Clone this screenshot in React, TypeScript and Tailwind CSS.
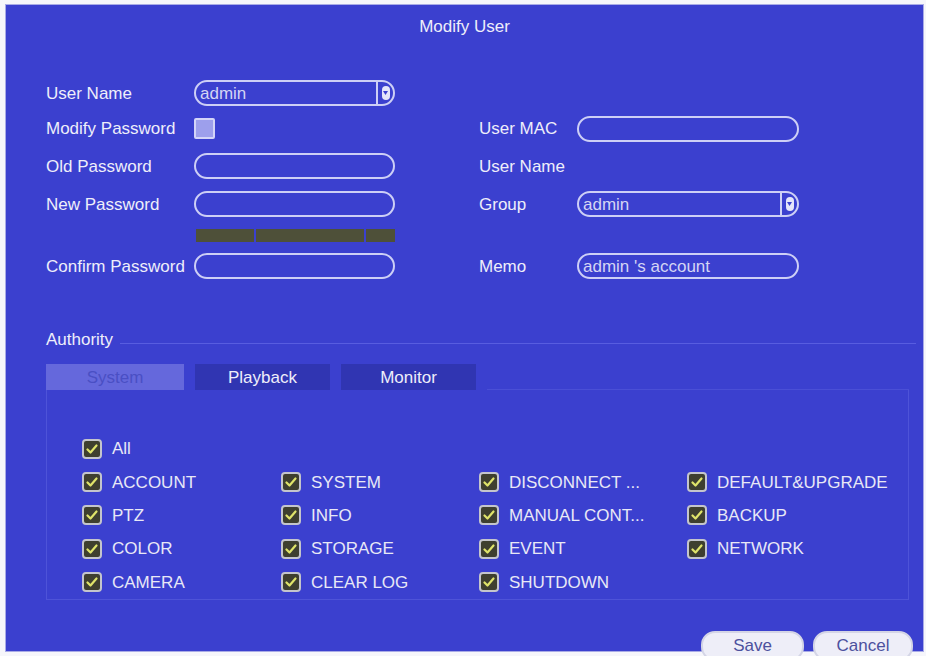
const PERMS: string[][] = [
  ["ACCOUNT", "SYSTEM", "DISCONNECT ...", "DEFAULT&UPGRADE"],
  ["PTZ", "INFO", "MANUAL CONT...", "BACKUP"],
  ["COLOR", "STORAGE", "EVENT", "NETWORK"],
  ["CAMERA", "CLEAR LOG", "SHUTDOWN", ""],
];

function Field({ value = "", dropdown = false }: { value?: string; dropdown?: boolean }) {
  return (
    <div className="flex h-[26px] w-full items-center overflow-hidden rounded-full border-2 border-[#cdcff6]">
      <span className="flex-1 truncate pl-[4px] text-[17px] leading-none text-[#d4d5f4]">{value}</span>
      {dropdown && (
        <span className="flex h-full w-[17px] items-center justify-center border-l-2 border-[#cdcff6]">
          <span className="flex h-[14px] w-[8px] items-center justify-center rounded-full bg-[#e4e5fa]">
            <svg width="5" height="4" viewBox="0 0 5 4">
              <path d="M0 0 H5 L2.5 4 Z" fill="#3b40cf" />
            </svg>
          </span>
        </span>
      )}
    </div>
  );
}

function Check({ label }: { label: string }) {
  if (!label) return <div />;
  return (
    <div className="flex h-[33.4px] items-center gap-[10px]">
      <span className="flex h-[20px] w-[20px] items-center justify-center rounded-[4px] border-2 border-[#c4c5cc] bg-[#3e3f2f]">
        <svg width="12" height="10" viewBox="0 0 12 10">
          <path d="M1.5 5.5 L4.5 8.5 L10.5 1.5" fill="none" stroke="#dfe46a" strokeWidth="2.2" strokeLinecap="round" strokeLinejoin="round" />
        </svg>
      </span>
      <span className="whitespace-nowrap text-[17px] leading-none text-[#e8e8f6]">{label}</span>
    </div>
  );
}

export default function App() {
  return (
    <div
      className="h-[656px] w-[926px] overflow-hidden bg-[#f6f6fb] pl-[5px] pt-[4px]"
      style={{ fontFamily: '"Liberation Sans", Arial, sans-serif' }}
    >
      <div className="flex h-[648px] w-[919px] flex-col border border-[#a9abe6] bg-[#3b40cf] pl-[40px] text-[#eeeefa] *:shrink-0">
        {/* title */}
        <div className="flex h-[44px] items-center justify-center pr-[40px] text-[17px]">Modify User</div>

        {/* form */}
        <div className="mt-[27px] grid grid-cols-[148px_201px_84px_98px_222px] grid-rows-[34px_37px_38px_38px_25px_36px] items-center text-[17px] leading-none">
          <span>User Name</span>
          <Field value="admin" dropdown />
          <span />
          <span />
          <span />

          <span>Modify Password</span>
          <span className="h-[21px] w-[21px] rounded-[2px] border-2 border-[#d3d4f8] bg-[#9d9fec]" />
          <span />
          <span>User MAC</span>
          <Field />

          <span>Old Password</span>
          <Field />
          <span />
          <span>User Name</span>
          <span />

          <span>New Password</span>
          <Field />
          <span />
          <span>Group</span>
          <Field value="admin" dropdown />

          <span />
          <div className="ml-[2px] flex h-[13px] gap-[2px] blur-[0.7px]">
            <span className="w-[58px] bg-[#4e5039]" />
            <span className="w-[108px] bg-[#4e5039]" />
            <span className="flex-1 bg-[#4e5039]" />
          </div>
          <span />
          <span />
          <span />

          <span>Confirm Password</span>
          <Field />
          <span />
          <span>Memo</span>
          <Field value="admin 's account" />
        </div>

        {/* authority */}
        <div className="mt-[44px] flex h-[20px] items-end gap-[7px] pr-[7px] text-[17px] leading-none">
          <span>Authority</span>
          <span className="mb-[4px] h-px flex-1 bg-[#585de0]" />
        </div>

        <div className="mt-[16px] flex h-[26px] w-[863px] items-stretch gap-[11px] text-[17px] leading-none">
          <span className="flex w-[138px] items-center justify-center bg-[#6568dc] text-[#4a4fc4]">System</span>
          <span className="flex w-[135px] items-center justify-center bg-[#3035b2]">Playback</span>
          <span className="flex w-[135px] items-center justify-center bg-[#3035b2]">Monitor</span>
          <span className="flex-1 border-b border-[#4a4fd6]" />
        </div>

        <div className="h-[210px] w-[863px] border border-t-0 border-[#4e53d8] pl-[35px] pt-[42px]">
          <Check label="All" />
          <div className="grid grid-cols-[199px_198px_208px_auto]">
            {PERMS.flat().map((p, i) => (
              <Check key={i} label={p} />
            ))}
          </div>
        </div>

        {/* buttons */}
        <div className="mt-[31px] flex justify-end gap-[9px] pr-[10px]">
          <button className="h-[30px] w-[103px] rounded-[14px] border-2 border-[#d4d5e6] bg-[#eeeef8] pb-[4px] text-[17px] text-[#4c519e]">
            Save
          </button>
          <button className="h-[30px] w-[100px] rounded-[14px] border-2 border-[#d4d5e6] bg-[#eeeef8] pb-[4px] text-[17px] text-[#4c519e]">
            Cancel
          </button>
        </div>
      </div>
    </div>
  );
}
